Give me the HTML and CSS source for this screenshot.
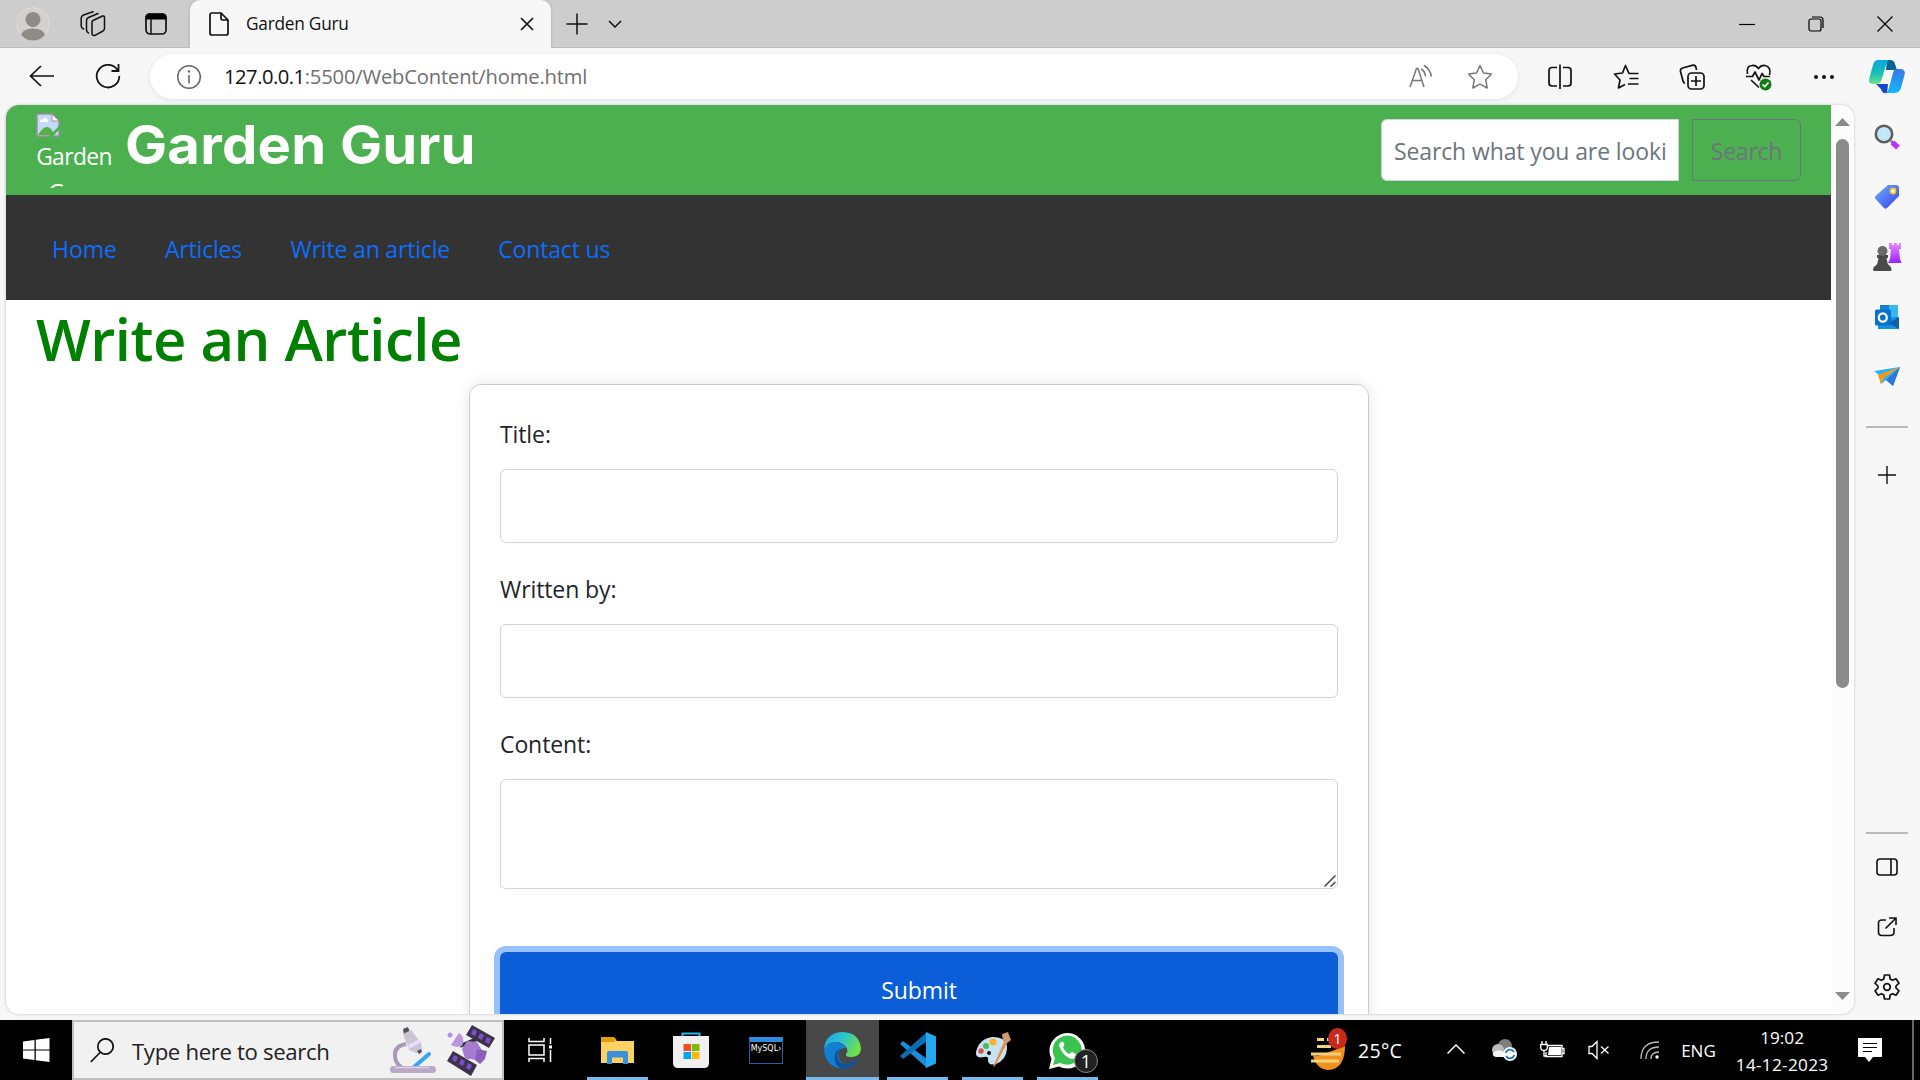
FILE: index.html
```html
<!DOCTYPE html>
<html lang="en">
<head>
<meta charset="utf-8">
<title>Garden Guru</title>
<link rel="stylesheet" href="styles.css">
</head>
<body>
<div class="desktop">
  <div class="tabstrip">
    <svg class="avatar" width="34" height="42" viewBox="0 0 34 42"><ellipse cx="17" cy="21" rx="16" ry="16.500" fill="#d3d1ce" stroke="#dedcda"/><circle cx="17" cy="16.500" r="7.500" fill="#8e8a86"/><path d="M5 32Q7 25.500 17 25.500T29 32Q24 37.500 17 37.500T5 32Z" fill="#8e8a86"/></svg>
    <svg class="workspaces" width="26" height="26" viewBox="0 0 26 26" fill="none" stroke="#111" stroke-width="1.500" stroke-linejoin="round" stroke-linecap="round"><path d="M13 9.500l9.500-4.500Q24.500 4.500 24.500 6.500V17.500Q24.500 19 23 20L15 24.300Q12 25 12 22.500V11Q12 10 13 9.500Z"/><path d="M8.500 22Q6.500 21 6.500 19V9.500Q6.500 7.500 8.500 6.500L18 2.500"/><path d="M3.500 18Q1.200 17 1.200 15V7Q1.200 5 3.500 4L13 .8"/></svg>
    <svg class="tabmenu" width="24" height="24" viewBox="0 0 24 24"><rect x="2" y="2" width="20" height="20" rx="4" fill="none" stroke="#111" stroke-width="1.700"/><path d="M1.500 7.500V5Q1.500 1.500 5 1.500H19Q22.500 1.500 22.500 5V7.500Z" fill="#000"/><path d="M7 7V22" stroke="#111" stroke-width="1.500"/></svg>
    <div class="tab">
      <svg width="20" height="24" viewBox="0 0 20 24" fill="none" stroke="#111" stroke-width="1.700" stroke-linejoin="round"><path d="M3 1H12L19 8V21Q19 23 17 23H3Q1 23 1 21V3Q1 1 3 1ZM12 1V6.500Q12 8 13.500 8H19"/></svg>
      <span class="t tab-title">Garden Guru</span>
      <svg class="tab-close" width="14" height="14" viewBox="0 0 14 14" stroke="#111" stroke-width="1.700"><path d="M1 1L13 13M13 1L1 13"/></svg>
    </div>
    <svg class="newtab" width="22" height="22" viewBox="0 0 22 22" stroke="#111" stroke-width="1.500"><path d="M11 .5V21.500M.5 11H21.500"/></svg>
    <svg class="chev" width="14" height="8" viewBox="0 0 14 8" fill="none" stroke="#111" stroke-width="1.500"><path d="M1 1L7 7L13 1"/></svg>
    <div class="winctl">
      <svg width="16" height="16" viewBox="0 0 16 16" stroke="#000" stroke-width="1.200"><path d="M0 8.500H16"/></svg>
      <svg width="16" height="16" viewBox="0 0 16 16" fill="none" stroke="#000" stroke-width="1.200"><rect x="1" y="3" width="12" height="12" rx="2"/><path d="M4 1H12Q15 1 15 4V12"/></svg>
      <svg width="16" height="16" viewBox="0 0 16 16" stroke="#000" stroke-width="1.200"><path d="M.5 .5L15.500 15.500M15.500 .5L.5 15.500"/></svg>
    </div>
  </div>

  <div class="toolbar">
    <svg class="back" width="26" height="22" viewBox="0 0 26 22" fill="none" stroke="#111" stroke-width="1.700"><path d="M12 1L1.500 11L12 21M1.500 11H25"/></svg>
    <svg class="reload" width="26" height="26" viewBox="0 0 26 26" fill="none" stroke="#111" stroke-width="1.800"><path d="M22.800 7.500A11.300 11.300 0 1 0 24.300 13M23.500 1V8H16.500"/></svg>
    <div class="address">
      <svg class="info" width="26" height="26" viewBox="0 0 26 26"><circle cx="13" cy="13" r="11.300" fill="none" stroke="#666" stroke-width="1.500"/><path d="M13 11V19.500" stroke="#666" stroke-width="1.600"/><circle cx="13" cy="7.500" r="1.200" fill="#666"/></svg>
      <span class="url"><span class="t host">127.0.0.1</span><span class="t path">:5500/WebContent/home.html</span></span>
      <svg class="aloud" width="26" height="26" viewBox="0 0 26 26" fill="none" stroke="#767676" stroke-width="1.500"><path d="M2 23L8.500 4.500H10L16 23M4.500 16.500H13.800M13 5Q17 7 17.500 12.500M16 1.500Q22 5 23.500 12.500"/></svg>
      <svg class="star" width="26" height="26" viewBox="0 0 26 26" fill="none" stroke="#767676" stroke-width="1.500" stroke-linejoin="round"><path d="M13 1.500L16.500 9L24.500 10L18.700 15.800L20.200 24L13 20.200L5.800 24L7.300 15.800L1.500 10L9.500 9Z"/></svg>
    </div>
    <div class="tools">
      <svg width="26" height="26" viewBox="0 0 26 26" fill="none" stroke="#111" stroke-width="1.700"><path d="M10 3.500H5Q2 3.500 2 6.500V19Q2 22 5 22H10M16 3.500H21Q24 3.500 24 6.500V19Q24 22 21 22H16M13 .5V25"/></svg>
      <svg width="26" height="26" viewBox="0 0 26 26" fill="none" stroke="#111" stroke-width="1.700" stroke-linejoin="round"><path d="M17 9.500H16L12.500 1.500L9.500 9L1.500 10L7 16L5.500 24L12 20.500M16 9.500H25.500M16.500 14.500H25.500M15 20H25.500"/></svg>
      <svg width="26" height="26" viewBox="0 0 26 26" fill="none" stroke="#111" stroke-width="1.700"><rect x="9" y="9" width="16" height="16" rx="3.500"/><path d="M17 12V22M12 17H22M6 19.500Q4.500 19 4 17L1.500 7.500Q1 5 3.500 4L14 1.200Q16.500 1 17 3.500L17.500 6"/></svg>
      <svg width="28" height="28" viewBox="0 0 28 28" fill="none" stroke="#111" stroke-width="1.700" stroke-linejoin="round"><path d="M2.500 11Q1 3 7 2.500Q11 2 13.500 5.500Q16 2 20 2.500Q26.500 4 24.500 12M1 13.500H7.500L10 9L14 17L17 10.500L19 13.500H25M6 17L14 24.500"/><circle cx="20.500" cy="21.500" r="6" fill="#107c10" stroke="none"/><path d="M17.500 21.500L19.700 23.600L23.500 19.500" stroke="#fff"/></svg>
      <svg width="22" height="6" viewBox="0 0 22 6" fill="#111"><circle cx="3" cy="3" r="2"/><circle cx="11" cy="3" r="2"/><circle cx="19" cy="3" r="2"/></svg>
    </div>
    <svg class="copilot" width="36" height="34" viewBox="0 0 36 34"><defs><linearGradient id="c1" x1="0" y1="0" x2="0" y2="1"><stop offset="0" stop-color="#0aa5df"/><stop offset=".6" stop-color="#1bc2b4"/><stop offset="1" stop-color="#73e08a"/></linearGradient><linearGradient id="c2" x1="0" y1="0" x2="0" y2="1"><stop offset="0" stop-color="#3678e4"/><stop offset="1" stop-color="#14b8fb"/></linearGradient></defs><path d="M18 0H21Q25 0 26 4L28 10H17Z" fill="#08638f"/><path d="M7 24H19L18 33Q13 34 12 29Z" fill="#1747d1"/><path d="M27 9H31Q37 9 35.500 15L32 28Q30.500 33 25 33H17Q19 32 20 28L24 13Q25 9 27 9Z" fill="url(#c2)"/><path d="M9 0H21Q18.500 0 17 5L12.500 20Q11 24 7 24H4Q-1 24 .3 18L4 5Q5.500 0 9 0Z" fill="url(#c1)"/></svg>
  </div>

  <div class="middle">
    <div class="viewport">
      <div class="page">
        <header class="site-head">
          <div class="logo">
            <svg width="24" height="24" viewBox="0 0 24 24"><path d="M1 1H16L23 8V23H1Z" fill="#c6d9f9" stroke="#9b939f" stroke-width="1.500"/><path d="M16 1V8H23Z" fill="#fff" stroke="#9b939f"/><path d="M4 9Q4 6 7 6Q9 3 11 6Q13 7 12 9Z" fill="#fff"/><path d="M2 22Q9 10 15 16L19 22Z" fill="#56b046"/><path d="M12 24L24 12V16L16 24Z" fill="#4caf50"/></svg>
            <span class="alt t">Garden<br>Guru</span>
          </div>
          <h1><span class="t brand">Garden Guru</span></h1>
          <div class="searchbox"><span class="t ph">Search what you are looki</span></div>
          <div class="searchbtn"><span class="t sb">Search</span></div>
        </header>
        <nav class="site-nav">
          <a class="t n1">Home</a><a class="t n2">Articles</a><a class="t n3">Write an article</a><a class="t n4">Contact us</a>
        </nav>
        <h2><span class="t head">Write an Article</span></h2>
        <div class="card">
          <label><span class="t">Title:</span></label>
          <div class="field"></div>
          <label><span class="t">Written by:</span></label>
          <div class="field"></div>
          <label><span class="t">Content:</span></label>
          <div class="field area"><svg width="12" height="12" viewBox="0 0 12 12" stroke="#444" stroke-width="1.500"><path d="M.5 11.500L11.500 .5M6.500 11.500L11.500 7"/></svg></div>
          <div class="submit"><span class="t sub">Submit</span></div>
        </div>
      </div>
      <div class="scroll">
        <svg width="15" height="8" viewBox="0 0 15 8"><path d="M0 8L7.500 0L15 8Z" fill="#8b8b8b"/></svg>
        <div class="thumb"></div>
        <svg class="down" width="15" height="8" viewBox="0 0 15 8"><path d="M0 0L7.500 8L15 0Z" fill="#8b8b8b"/></svg>
      </div>
    </div>
    <aside class="sidebar">
      <svg width="28" height="28" viewBox="0 0 28 28"><defs><linearGradient id="tg" x1="0" y1="0" x2="1" y2="1"><stop offset="0" stop-color="#6cb0ff"/><stop offset="1" stop-color="#3b3fe8"/></linearGradient><linearGradient id="rk" x1="0" y1="0" x2="0" y2="1"><stop offset="0" stop-color="#e08cff"/><stop offset="1" stop-color="#a020ff"/></linearGradient></defs><path d="M18 18L20 20" stroke="#777" stroke-width="3"/><path d="M19.500 19.500L25 24.500" stroke="#c030ff" stroke-width="5.500"/><circle cx="11" cy="11" r="8.200" fill="#c3e6fb" stroke="#5f5f5f" stroke-width="2.600"/></svg>
      <svg width="28" height="28" viewBox="0 0 28 28"><path d="M15 2H23Q26 2 26 5V13L14 25Q12.500 26.500 11 25L2.500 16Q1.500 15 2.500 13Z" fill="url(#tg)"/><circle cx="20" cy="8" r="2.600" fill="#fff" stroke="#fbc11a" stroke-width="1.600"/></svg>
      <svg class="chess" width="30" height="30" viewBox="0 0 30 30"><path d="M17 1H20V3H22V1H25V3H27V1H29V7H27L28 17L29.500 21H16L18 17L19 7H17Z" fill="url(#rk)"/><path d="M5 13H16V16H14.500L15.500 21Q16 23 18 24Q19.500 25 19.500 28Q19.500 29 18 29H3Q1 29 1 28Q1 25 3 24Q5 23 5.500 21L6.500 16H5Z" fill="#4a4a4a"/><circle cx="10.500" cy="9" r="5" fill="#696969"/></svg>
      <svg width="28" height="28" viewBox="0 0 28 28"><path d="M7 2H25V24H7Z" fill="#35b8f1"/><path d="M7 2H16V10H7Z" fill="#1681c9"/><path d="M5 26V14L26 14V26Z" fill="#1490df"/><path d="M26 14V26L16 20Z" fill="#0f5fa8"/><rect x="2" y="6.500" width="16" height="16" rx="1.500" fill="#0871cf"/><ellipse cx="9.800" cy="14.500" rx="4" ry="4.200" fill="none" stroke="#fff" stroke-width="2.200"/></svg>
      <svg width="28" height="28" viewBox="0 -2 28 28"><path d="M1 6L27 2L20 21L13 15L8 19L6 10Z" fill="#2ab2f2"/><path d="M27 2L13 15L20 21Z" fill="#2f73dd"/><path d="M27 2L5 10L8 19L11 13Z" fill="#f39a18"/></svg>
      <hr>
      <svg class="plus" width="18" height="18" viewBox="0 0 18 18" stroke="#111" stroke-width="1.400"><path d="M9 0V18M0 9H18"/></svg>
      <hr class="low">
      <svg class="p1" width="22" height="18" viewBox="0 0 22 18" fill="none" stroke="#111" stroke-width="1.600"><rect x="1" y="1" width="20" height="16" rx="3"/><path d="M15 1V17"/></svg>
      <svg class="p2" width="20" height="20" viewBox="0 0 20 20" fill="none" stroke="#111" stroke-width="1.600"><path d="M9 3H5Q1.500 3 1.500 6V15Q1.500 18.500 5 18.500H13Q17 18.500 17 15V11M12 1H19V8M19 1L8.500 11.500"/></svg>
      <svg class="p3" width="26" height="26" viewBox="0 0 26 26" fill="none" stroke="#111" stroke-width="1.700" stroke-linejoin="round"><path d="M10.500 1H15.500L16.200 5L18.500 6.300L22 4.800L25 9.200L22 12V14L25 16.800L22 21.200L18.500 19.700L16.200 21L15.500 25H10.500L9.800 21L7.500 19.700L4 21.200L1 16.800L4 14V12L1 9.200L4 4.800L7.500 6.300L9.800 5Z"/><circle cx="13" cy="13" r="3.300"/></svg>
    </aside>
  </div>

  <div class="taskbar">
    <svg class="start" width="28" height="24" viewBox="0 0 28 24" fill="#fff"><path d="M1 3.500L12.500 2V11.500H1ZM13.800 1.800L27.500 0V11.500H13.800ZM1 12.500H12.500V22L1 20.500ZM13.800 12.500H27.500V24L13.800 22.200Z"/></svg>
    <div class="tsearch">
      <svg class="mag" width="24" height="25" viewBox="0 0 24 25" fill="none" stroke="#111" stroke-width="1.700"><circle cx="15.500" cy="8.500" r="7.700"/><path d="M10 14.500L.8 24"/></svg>
      <span class="t ts">Type here to search</span>
      <svg class="scope" width="48" height="48" viewBox="0 0 48 48"><path d="M17 18Q5 20 6 30Q6 38 14 42" fill="none" stroke="#aa9ab8" stroke-width="4"/><path d="M40 28L24 42" stroke="#36a5ee" stroke-width="4" stroke-linecap="round"/><rect x="1" y="40" width="46" height="7" rx="3.500" fill="#b9a9c4"/><path d="M6 41.500H40" stroke="#dcd2e3" stroke-width="1.500"/><path d="M14 3L19 1L21 6L15 9Z" fill="#55505c"/><path d="M14 8L22 4L32 17L33 23L27 27L20 24Z" fill="#cac4d2"/><path d="M19 19L30 13L32 16L20 23Z" fill="#ebdcf7"/><path d="M28 25L32 23L33 26L30 28Z" fill="#55505c"/></svg>
      <svg class="sat" width="48" height="52" viewBox="0 0 48 52"><path d="M13 22L37 12M20 34L30 22" stroke="#333" stroke-width="4"/><path d="M25 1L48 14L42 24L19 11Z" fill="#3c3348"/><path d="M6 27L30 41L24 52L0 37Z" fill="#3c3348"/><g fill="#7c4fd0"><path d="M26 5l4 2-2 5-4-2zM33 9l4 2-2 5-4-2zM40 13l4 2-2 5-4-2zM7 31l4 2-2 5-4-2zM14 35l4 2-2 5-4-2zM21 39l4 2-2 5-4-2z"/></g><path d="M20 17L30 18L36 28L29 36L18 34L15 25Z" fill="#a57bd0"/><path d="M30 25L40 27L38 35L33 40L28 36Z" fill="#8a60b8"/><path d="M12 9Q19 13 15 22Q8 24 4 21Z" fill="#b796dc"/><circle cx="3" cy="11" r="2.500" fill="#b98cf0"/></svg>
    </div>
    <svg class="taskview" width="25" height="24" viewBox="0 0 25 24" fill="none" stroke="#fff" stroke-width="1.500"><path d="M1 0V3.500H16V0M1 24V20.500H16V24M22.500 0V6M22.500 12V24"/><rect x="1" y="7" width="15" height="10"/><rect x="21" y="7.500" width="3" height="3" fill="#fff" stroke="none"/></svg>
    <div class="apps">
      <div class="app run"><svg width="33" height="27" viewBox="0 0 33 27"><path d="M0 1H13L16 4H33V26H0Z" fill="#fdd262"/><path d="M0 0H13L15.500 2.500L13 5H0Z" fill="#df9f0b"/><path d="M6 27V16Q6 14 8 14H25Q27 14 27 16V27H22V20.500H11V27Z" fill="#3990dc"/></svg></div>
      <div class="app"><svg class="nudge" width="36" height="36" viewBox="0 0 36 36"><path d="M9.500 6V1.500H26.500V6" fill="none" stroke="#2cb5f1" stroke-width="2"/><path d="M0 4H36V31Q36 36 31 36H5Q0 36 0 31Z" fill="#f0f0f0"/><path d="M10.500 12H18V19H10.500Z" fill="#f25022"/><path d="M19 12H26.500V19H19Z" fill="#7fba00"/><path d="M10.500 20H18V27H10.500Z" fill="#00a4ef"/><path d="M19 20H26.500V27H19Z" fill="#ffb900"/></svg></div>
      <div class="app mysql"><span class="nudge">MySQL›</span></div>
      <div class="app run active"><svg width="37" height="37" viewBox="0 0 37 37"><defs><linearGradient id="e1" x1="0" y1="0" x2="1" y2=".5"><stop offset="0" stop-color="#1b9de2"/><stop offset=".5" stop-color="#2fc3cf"/><stop offset="1" stop-color="#6ee04a"/></linearGradient></defs><path d="M0 17Q2 0 19 0Q36 1 37 17Q36 25 27 25Q21 25 22 22Q25 19 22 15Q15 7 6 12Q1 15 0 17Z" fill="url(#e1)"/><path d="M0 18Q3 9 12 10Q20 11 22 16Q15 15 14 23Q15 32 25 34Q21 37 17 36.500Q1 34 0 18Z" fill="#127fd2"/><path d="M16 17Q11 23 15 29Q21 36 33 27Q35 26 34 28Q28 37 19 37Q9 34 11 23Q12 18 16 17Z" fill="#10509d"/></svg></div>
      <div class="app run"><svg width="36" height="36" viewBox="0 0 36 36"><path d="M0 12L3 9L27 27V36Z" fill="#1a8cd8"/><path d="M0 24L3 27L27 9V0Z" fill="#0b6fb8"/><path d="M26 0L36 4.500V31.500L26 36Z" fill="#25a7f2"/></svg></div>
      <div class="app run"><svg width="36" height="36" viewBox="0 0 36 36"><path d="M17 5Q33 5 32 17Q31 28 21 32Q13 34 13 28Q14 24 9 25Q0 27 1 20Q4 7 17 5Z" fill="#c5e3f3"/><circle cx="18" cy="10" r="3.500" fill="#f9b41f"/><circle cx="11" cy="14" r="3" fill="#4dbb55"/><circle cx="6" cy="19" r="2.700" fill="#e34b48"/><circle cx="14" cy="21" r="2" fill="#111"/><path d="M29 10L32 11L20 34L18 35Z" fill="#e88b3a"/><path d="M27 2L33 0L36 8L31 12L28 9Z" fill="#c99c72"/></svg></div>
      <div class="app run wa"><svg width="37" height="37" viewBox="0 0 37 37"><path d="M0 37L2.500 27A17.800 17.800 0 1 1 10 34.500Z" fill="#fff"/><path d="M4 33L6 26A14.500 14.500 0 1 1 11.500 31Z" fill="#3ac351"/><path d="M12 10Q9 12 11 16Q15 25 23 27Q27 27 27 22L23 20L20 22Q16 20 14 15L15.500 13L14 9.500Z" fill="#fff"/></svg><span class="count">1</span></div>
    </div>
    <div class="weather"><svg width="36" height="42" viewBox="0 0 36 42"><path d="M2 26Q8 28 13 25L34 17Q34 40 17 41Q5 40 2 26Z" fill="#f2901f"/><path d="M6 10.500H13M16 10.500H18M6 17.500H20M0 25H30M0 32H28" stroke="#f3d27a" stroke-width="2.800"/></svg><span class="wbadge">1</span></div>
    <span class="t temp">25°C</span>
    <svg class="up" width="18" height="10" viewBox="0 0 18 10" fill="none" stroke="#fff" stroke-width="1.500"><path d="M.5 9.500L9 1L17.500 9.500"/></svg>
    <svg class="cloud" width="26" height="24" viewBox="0 -2 26 24"><circle cx="13" cy="6" r="7" fill="#7d7d7d"/><circle cx="6" cy="10" r="6" fill="#bbb"/><path d="M1 13Q5 8 12 12L16 17H4Q0 16 1 13Z" fill="#f4f4f4"/><circle cx="18" cy="14" r="7" fill="#fff"/><path d="M13.700 13A4.500 4.500 0 0 1 22 12M22.300 15A4.500 4.500 0 0 1 14 16" fill="none" stroke="#1c6fc4" stroke-width="1.700"/></svg>
    <svg class="bat" width="25" height="18" viewBox="0 0 25 18"><path d="M8 4.500H22V15.500H6V11M22 7.500H24V12.500H22" fill="none" stroke="#fff" stroke-width="1.300"/><path d="M9 6H21V14H8Z" fill="#fff"/><path d="M2 0V3M6 0V3M.7 3.500H7.300V7Q7 9.500 4 9.500T.7 7ZM4 9.500V15H7" fill="none" stroke="#fff" stroke-width="1.300"/></svg>
    <svg class="vol" width="22" height="20" viewBox="0 0 22 20" fill="none" stroke="#fff" stroke-width="1.300"><path d="M1 6.500H4L9 1.500V18.500L4 13.500H1ZM13 6.500L20.500 13.500M20.500 6.500L13 13.500"/></svg>
    <svg class="wifi" width="20" height="20" viewBox="0 0 20 20" fill="none" stroke="#bbb" stroke-width="1.300"><path d="M1 19Q1 2 19 2M6 19Q6 7 19 7M11 19Q11 12 19 12"/><circle cx="17" cy="17" r="1.700" fill="#fff" stroke="none"/></svg>
    <span class="t eng">ENG</span>
    <div class="clock"><span class="t time">19:02</span><span class="t date">14-12-2023</span></div>
    <svg class="note" width="24" height="24" viewBox="0 0 24 24"><path d="M0 0H24V19H15L11 24L7 19H0Z" fill="#fff"/><path d="M5 5.500H19M5 9.500H19M5 13.500H14" stroke="#000" stroke-width="1.200"/></svg>
    <div class="peek"></div>
  </div>
</div>
</body>
</html>
```
FILE: styles.css
```css
* { box-sizing: border-box; }
body { margin: 0; font-family: "Open Sans", "Noto Sans", sans-serif; color: #212529; }
svg { display: block; flex: none; }
.t { white-space: nowrap; }
.desktop { width: 1920px; height: 1080px; overflow: hidden; display: flex; flex-direction: column; background: #f7f7f7; }

.tabstrip { height: 48px; background: #cdcdcd; display: flex; align-items: center; border-bottom: 1px solid #bdbdbd; flex: none; }
.avatar { margin-left: 16px; }
.workspaces { margin-left: 30px; }
.tabmenu { margin-left: 38px; }
.tab { width: 361px; height: 48px; margin: 0 0 -1px 22px; background: #f7f7f7; border-radius: 10px 10px 0 0; display: flex; align-items: center; padding: 0 17px 0 19px; box-shadow: 0 0 3px #aaa; clip-path: inset(0 -4px 0 -4px); }
.tab-title { font-size: 17.3px; letter-spacing: -.25px; margin: -2px 0 0 17px; color: #111; }
.tab-close { margin-left: auto; }
.newtab { margin-left: 15px; }
.chev { margin-left: 20px; }
.winctl { margin-left: auto; display: flex; gap: 53px; padding-right: 27px; }

.toolbar { height: 57px; display: flex; align-items: center; flex: none; }
.back { margin: -1px 0 0 29px; }
.reload { margin: -1px 0 0 40px; }
.address { margin-left: 29px; width: 1368px; height: 45px; border-radius: 23px; background: #fff; box-shadow: 0 1px 5px rgba(0,0,0,.09); display: flex; align-items: center; padding: 0 25px 0 26px; }
.url { margin: -2px 0 0 22px; font-size: 20.2px; display: flex; }
.host { color: #111; letter-spacing: -.5px; }
.path { color: #707070; letter-spacing: -.18px; }
.aloud { margin-left: auto; margin-right: 33px; }
.tools { display: flex; align-items: center; gap: 40px; margin-left: 28.5px; }
.copilot { margin-left: auto; margin-right: 15px; }

.middle { height: 915px; display: flex; flex: none; }
.viewport { margin-left: 6px; width: 1848px; height: 909px; border-radius: 13px; overflow: hidden; background: #fff; display: flex; box-shadow: 0 0 3px #bbb; }
.page { width: 1825px; height: 909px; overflow: hidden; flex: none; }
.scroll { flex: 1; background: #fcfcfc; display: flex; flex-direction: column; align-items: center; padding: 13px 0 14px 0; }
.thumb { width: 13px; height: 549px; border-radius: 7px; background: #8b8b8b; margin-top: 13px; }
.down { margin-top: auto; }

.site-head { height: 90px; background: #4caf50; display: flex; padding: 8px 30px 0 30px; color: #fff; }
.logo { width: 76px; height: 75px; overflow: hidden; font-size: 22.8px; letter-spacing: -.6px; line-height: 36px; }
.alt { display: block; text-align: center; margin-top: 2px; }
h1 { margin: 0 0 0 13px; font: 700 53.5px/64px Inter, sans-serif; letter-spacing: .2px; }
.brand { display: inline-block; transform: scaleX(1.05); transform-origin: left; }
.searchbox { margin: 6px 0 0 auto; width: 298px; height: 62px; background: #fff; border: 1px solid #ced4da; border-radius: 6px 0 0 6px; padding-left: 12px; font-size: 23px; letter-spacing: -.12px; line-height: 62px; color: #6c757d; overflow: hidden; }
.searchbtn { margin: 6px 0 0 13px; width: 109px; height: 62px; border: 1px solid #6c757d; border-radius: 0 6px 6px 0; text-align: center; font-size: 23px; letter-spacing: -.25px; line-height: 62px; color: #6c757d; }
.site-nav { height: 105px; background: #333; display: flex; padding: 3px 0 0 46px; align-items: center; font-size: 23px; letter-spacing: -.18px; color: #0d6efd; }
.site-nav a { margin-right: 48.3px; }
.site-nav .n1 { letter-spacing: 0; margin-right: 48px; }
.site-nav .n2 { letter-spacing: -.2px; margin-right: 48.5px; }
h2 { margin: 0 0 0 30px; height: 84px; font-size: 58px; line-height: 78px; font-weight: 600; letter-spacing: -.5px; color: #008000; }
.card { width: 900px; height: 700px; margin-left: 463px; border: 1px solid #ccc; border-radius: 12px; box-shadow: 0 0 15px rgba(0,0,0,.1); padding: 29px 30px 0; font-size: 23px; letter-spacing: -.1px; }
label { display: block; height: 55px; line-height: 40px; }
.field { height: 74px; border: 1px solid #ced4da; border-radius: 6px; margin-bottom: 26px; }
.area { height: 110px; display: flex; align-items: flex-end; justify-content: flex-end; padding: 1px; }
.submit { margin-top: 63px; height: 76px; border-radius: 6px; background: #0b5ed7; box-shadow: 0 0 0 6px #98c1fe; color: #fff; text-align: center; line-height: 76px; }

.sidebar { flex: 1; display: flex; flex-direction: column; align-items: center; padding: 18px 0 0 0; gap: 32px; }
.sidebar hr { width: 42px; height: 2px; border: 0; background: #bbb; margin: 3px 0 0; flex: none; }
.chess { margin: -1px 0; }
.plus { margin-top: 6px; }
.sidebar hr.low { margin: auto 0 -8px; }
.p1 { margin-bottom: 9px; }
.p2 { margin-bottom: 5px; }
.p3 { margin-bottom: 20px; }

.taskbar { height: 60px; background: #000; display: flex; align-items: center; color: #fff; flex: none; }
.taskbar > * { flex: none; }
.start { margin-left: 22px; }
.tsearch { margin-left: 22px; width: 432px; height: 60px; background: #f1f1f1; border: 2px solid #bfbfbf; display: flex; align-items: center; padding-left: 16px; color: #222; }
.ts { font-size: 22.2px; letter-spacing: -.35px; margin: 2px 0 0 18px; }
.scope { margin-left: auto; }
.sat { margin: 0 7px 0 10px; }
.taskview { margin-left: 24px; }
.apps { display: flex; margin-left: 27px; }
.app { width: 75px; height: 60px; display: flex; align-items: center; justify-content: center; position: relative; }
.nudge { margin-right: 3px; }
.run { background: linear-gradient(#76b9ed, #76b9ed) bottom center / 61px 3px no-repeat; }
.active { width: 73px; margin: 0 1px; background: linear-gradient(#76b9ed, #76b9ed) bottom / 100% 3px no-repeat #484848; }
.mysql span { width: 34px; height: 27px; border: 1px solid #2a5ca8; border-top: 5px solid #2f8be0; font: 8px/14px "DejaVu Sans", sans-serif; text-align: center; }
.count { position: absolute; left: 44px; top: 29px; width: 24px; height: 24px; border-radius: 50%; border: 1px solid #888; background: #222; font-size: 18px; line-height: 22px; text-align: center; }
.weather { position: relative; margin-left: 206px; }
.wbadge { position: absolute; left: 17px; top: -1px; width: 19px; height: 21px; border-radius: 50%; background: #c42b1c; font-size: 14px; line-height: 21px; text-align: center; }
.temp { font-size: 19.5px; letter-spacing: .3px; margin: 1px 0 0 11px; }
.up { margin: -2px 0 0 45px; }
.cloud { margin-left: 27px; }
.bat { margin-left: 22px; }
.vol { margin-left: 23px; }
.wifi { margin-left: 30px; }
.eng { font-size: 17px; margin-left: 21px; }
.clock { display: flex; flex-direction: column; align-items: center; font-size: 17.2px; line-height: 27px; margin: 1px 0 0 20px; }
.date { letter-spacing: .3px; }
.note { margin-left: 30px; }
.peek { width: 2px; height: 60px; background: #666; margin-left: 30px; }
```
